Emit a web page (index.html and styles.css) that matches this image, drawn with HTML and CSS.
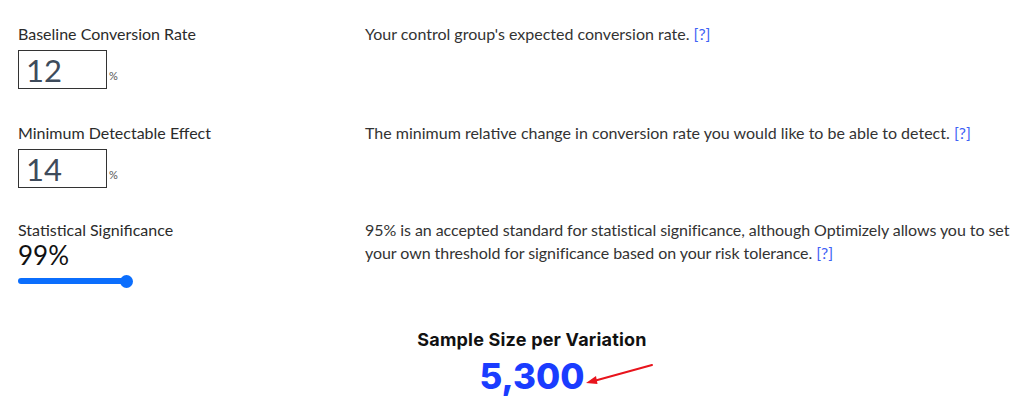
FILE: index.html
```html
<!DOCTYPE html>
<html lang="en">
<head>
<meta charset="utf-8">
<title>Sample Size Calculator</title>
<link rel="stylesheet" href="styles.css">
</head>
<body>
<div class="calc">
  <div class="row row-1">
    <div class="field">
      <div class="label">Baseline Conversion Rate</div>
      <div class="input-wrap">
        <input class="num" type="text" value="12">
        <span class="pct">%</span>
      </div>
    </div>
    <p class="desc">Your control group's expected conversion rate. <a href="#" class="help">[?]</a></p>
  </div>
  <div class="row row-2">
    <div class="field">
      <div class="label">Minimum Detectable Effect</div>
      <div class="input-wrap">
        <input class="num" type="text" value="14">
        <span class="pct">%</span>
      </div>
    </div>
    <p class="desc">The minimum relative change in conversion rate you would like to be able to detect. <a href="#" class="help">[?]</a></p>
  </div>
  <div class="row row-3">
    <div class="field">
      <div class="label">Statistical Significance</div>
      <div class="sig-value">99%</div>
      <div class="slider">
        <div class="track"></div>
        <div class="thumb"></div>
      </div>
    </div>
    <p class="desc desc-narrow">95% is an accepted standard for statistical significance, although Optimizely allows you to set your own threshold for significance based on your risk tolerance. <a href="#" class="help">[?]</a></p>
  </div>
  <div class="result">
    <div class="result-title">Sample Size per Variation</div>
    <div class="result-value">5,300</div>
    <svg class="arrow" width="80" height="30" viewBox="0 0 80 30">
      <line x1="72" y1="3" x2="12" y2="19.5" stroke="#e8141c" stroke-width="2" stroke-linecap="round"/>
      <polygon points="6,21 16,14 17.5,22" fill="#e8141c"/>
    </svg>
  </div>
</div>
</body>
</html>
```

FILE: styles.css
```css
* { box-sizing: border-box; }
html, body { margin: 0; padding: 0; background: #fff; }
body {
  font-family: "Lato", "Liberation Sans", sans-serif;
  color: #2b2b2b;
  width: 1024px;
  height: 418px;
  overflow: hidden;
}
.calc {
  padding: 24px 0 0 18px;
}
.row {
  display: flex;
  align-items: flex-start;
}
.row-1 { height: 99px; }
.row-2 { height: 97px; }
.row-3 { height: 100px; }
.field {
  width: 347px;
  flex: none;
}
.label {
  font-size: 16px;
  line-height: 20px;
  color: #2b2b2b;
}
.input-wrap {
  display: flex;
  align-items: flex-end;
  margin-top: 6px;
}
.num {
  width: 89px;
  height: 39px;
  border: 1px solid #333;
  border-radius: 0;
  padding: 0 0 0 7px;
  margin: 0;
  font-family: "Lato", "Liberation Sans", sans-serif;
  font-size: 31px;
  line-height: 37px;
  color: #3e4b5b;
  background: #fff;
  outline: none;
}
.pct {
  font-size: 11px;
  line-height: 11px;
  color: #555;
  margin: 0 0 8px 2px;
}
.desc {
  margin: -2px 0 0;
  font-size: 16px;
  line-height: 23px;
  color: #333;
  max-width: 655px;
}
.desc-narrow { letter-spacing: -0.06px; }
.help {
  color: #3f62f5;
  text-decoration: none;
}
.sig-value {
  font-size: 26px;
  line-height: 30px;
  color: #111;
  margin-top: 0;
}
.slider {
  display: flex;
  align-items: center;
  margin-top: 4px;
  height: 14px;
}
.track {
  width: 108px;
  height: 6px;
  border-radius: 3px;
  background: #0b6efd;
}
.thumb {
  width: 13px;
  height: 13px;
  border-radius: 50%;
  background: #0b6efd;
  margin-left: -6px;
}
.result {
  position: relative;
  padding-left: 22px;
  text-align: center;
  margin-top: 8px;
}
.result-title {
  font-family: "Inter", "Lato", sans-serif;
  font-size: 18px;
  font-weight: 700;
  line-height: 24px;
  color: #111;
  letter-spacing: 0.2px;
}
.result-value {
  font-family: "Inter", "Lato", sans-serif;
  font-size: 35px;
  font-weight: 800;
  line-height: 40px;
  color: #1a3cff;
  margin-top: 4px;
}
.arrow {
  position: absolute;
  left: 562px;
  top: 34px;
}
```
